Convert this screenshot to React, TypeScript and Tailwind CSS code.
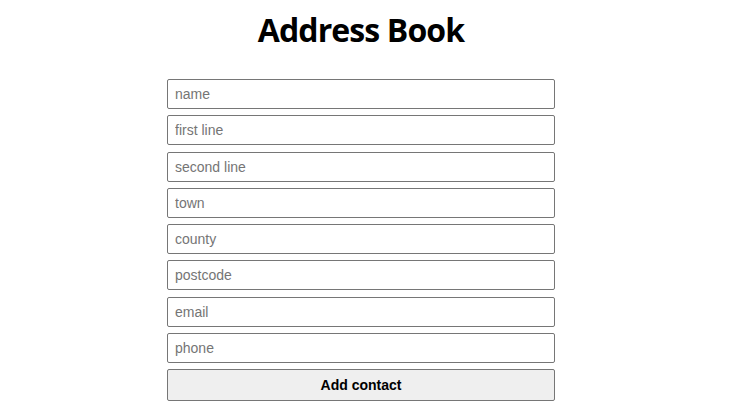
const fields = ['name', 'first line', 'second line', 'town', 'county', 'postcode', 'email', 'phone'];

export default function App() {
  return (
    <div className="min-h-[420px] w-[722px] bg-white font-['Liberation_Sans',Arial,sans-serif]">
      <h1 className="pt-[8px] text-center font-['Open_Sans',sans-serif] text-[32px] font-bold leading-[44px] tracking-[-0.9px] text-black">
        Address Book
      </h1>
      <form className="mx-auto mt-[27px] flex w-[388px] flex-col gap-[6.3px]" onSubmit={(e) => e.preventDefault()}>
        {fields.map((f) => (
          <input
            key={f}
            placeholder={f}
            className="h-[30px] rounded-[2px] border border-[#767676] bg-white px-[7px] text-[14px] text-black placeholder:text-[#757575] outline-none"
          />
        ))}
        <button className="h-[32px] rounded-[2px] border border-[#767676] bg-[#efefef] text-[14px] font-bold text-black">
          Add contact
        </button>
      </form>
    </div>
  );
}
